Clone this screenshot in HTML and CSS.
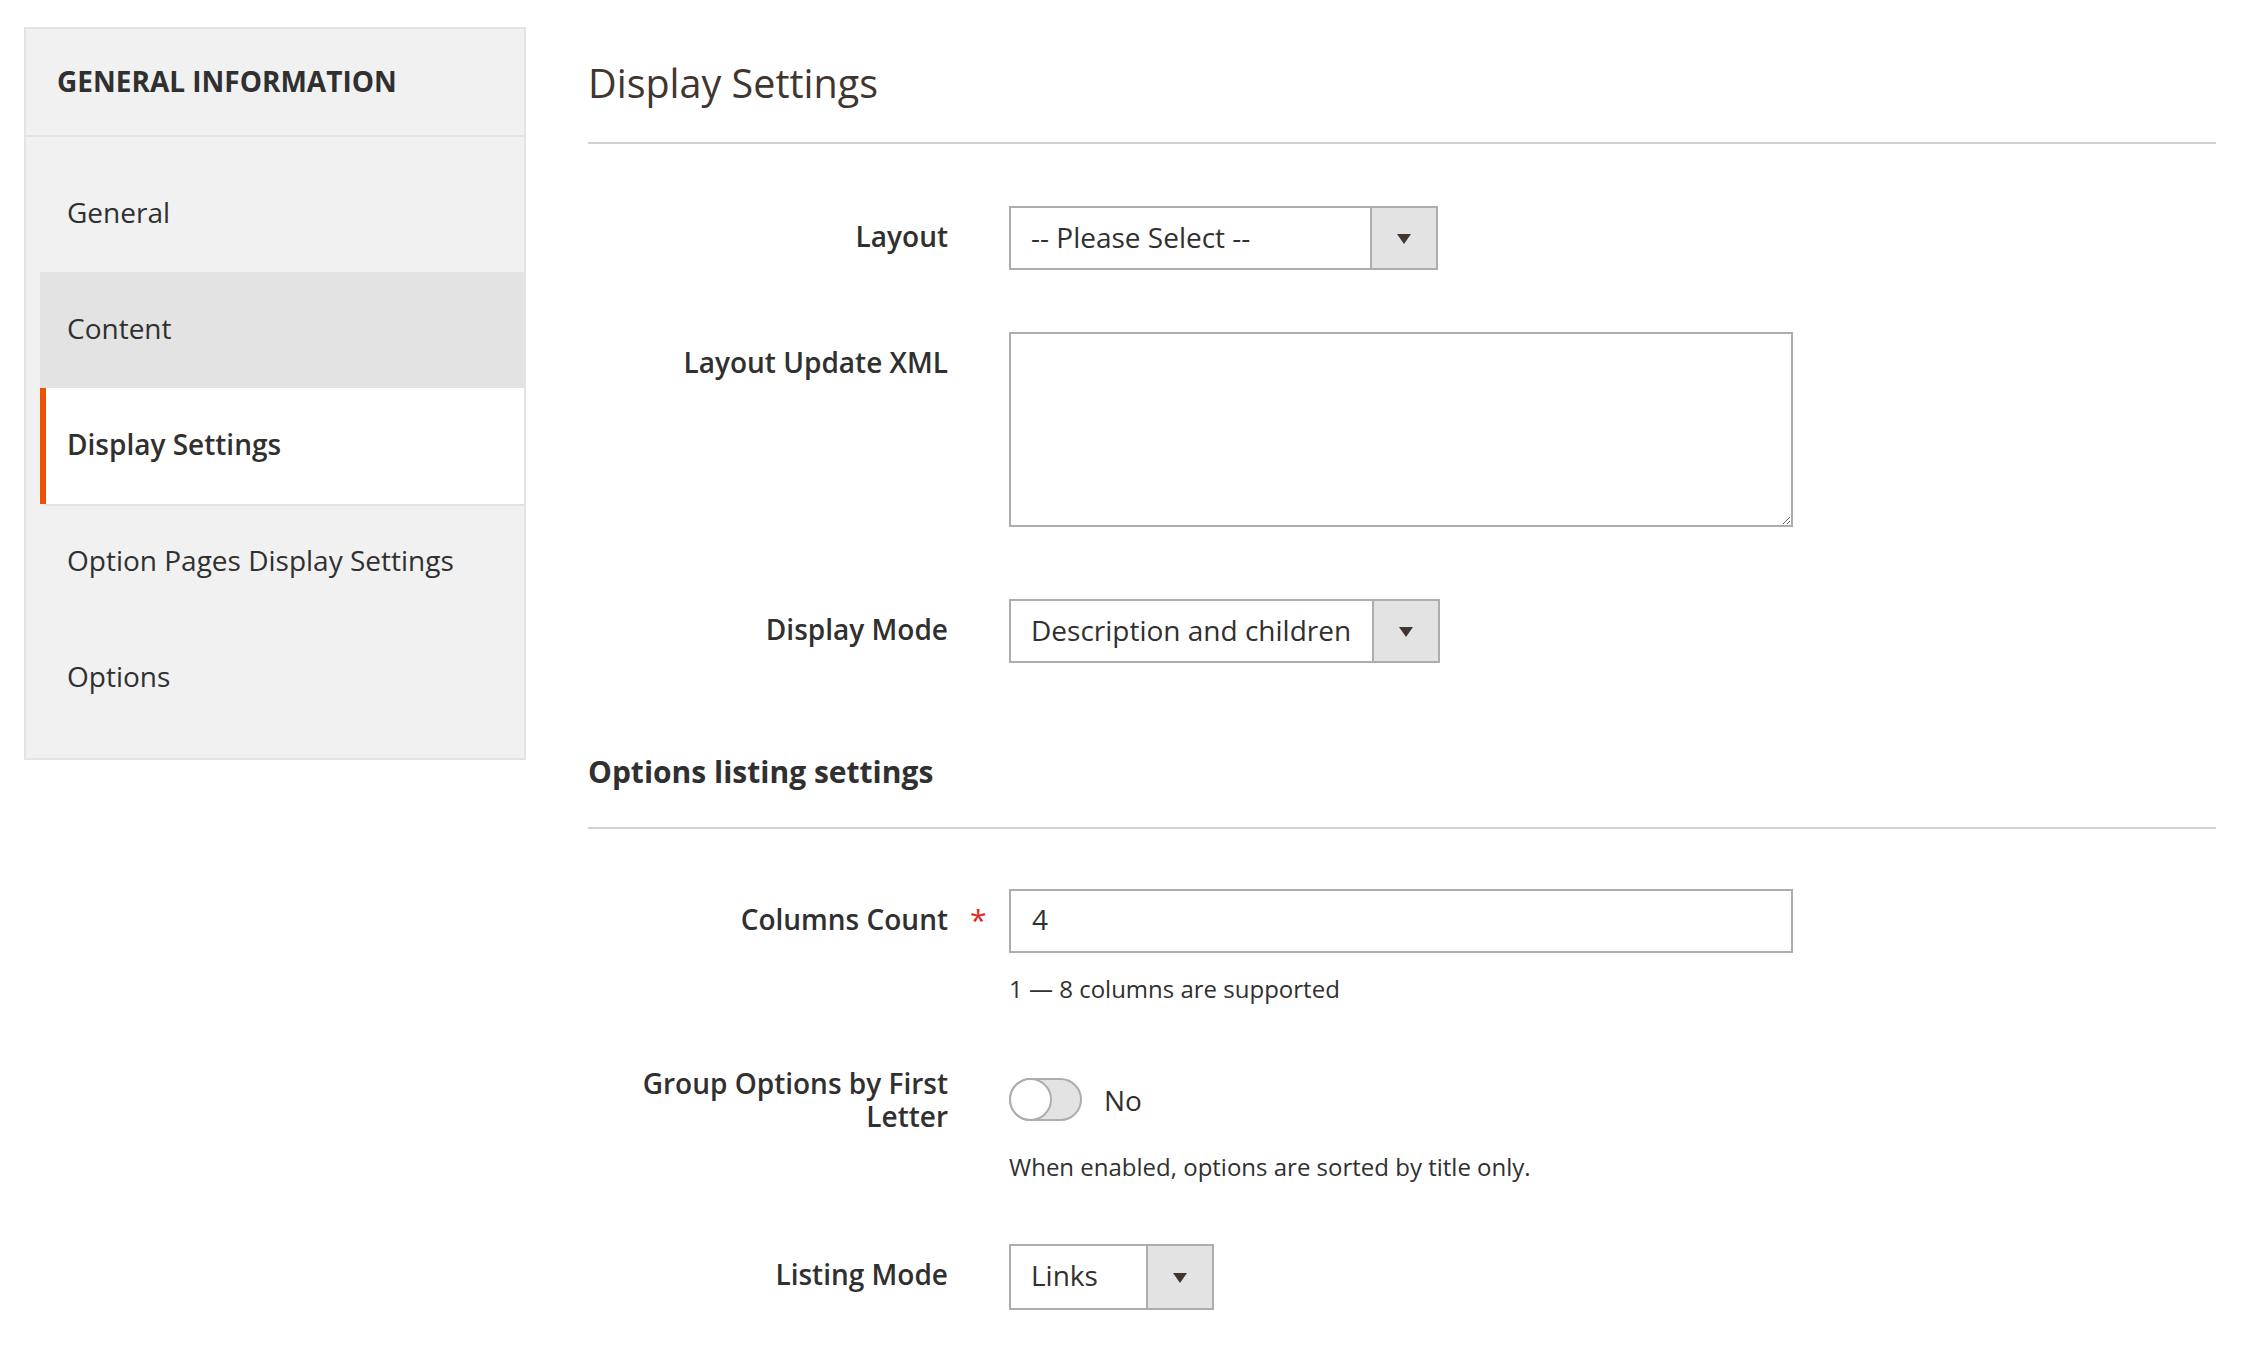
FILE: index.html
```html
<!DOCTYPE html>
<html lang="en">
<head>
<meta charset="utf-8">
<title>Display Settings</title>
<link rel="stylesheet" href="styles.css">
</head>
<body>
<div class="page">
  <aside class="nav">
    <div class="nav-title">General Information</div>
    <ul class="nav-list">
      <li class="nav-item">General</li>
      <li class="nav-item nav-item--hover">Content</li>
      <li class="nav-item nav-item--active">Display Settings</li>
      <li class="nav-item nav-item--after-active">Option Pages Display Settings</li>
      <li class="nav-item">Options</li>
    </ul>
  </aside>

  <main class="main">
    <h1 class="section-head">Display Settings</h1>

    <div class="field field--first">
      <label class="field-label">Layout</label>
      <span class="field-mark"></span>
      <div class="field-control">
        <div class="select select--layout">
          <span class="select-value">-- Please Select --</span>
          <span class="select-arrow"><span class="tri"></span></span>
        </div>
      </div>
    </div>

    <div class="field field--xml">
      <label class="field-label">Layout Update XML</label>
      <span class="field-mark"></span>
      <div class="field-control">
        <textarea class="textarea"></textarea>
      </div>
    </div>

    <div class="field field--mode">
      <label class="field-label">Display Mode</label>
      <span class="field-mark"></span>
      <div class="field-control">
        <div class="select select--mode">
          <span class="select-value">Description and children</span>
          <span class="select-arrow"><span class="tri"></span></span>
        </div>
      </div>
    </div>

    <h2 class="sub-head">Options listing settings</h2>

    <div class="field field--columns">
      <label class="field-label">Columns Count</label>
      <span class="field-mark field-mark--required">*</span>
      <div class="field-control">
        <input class="input" type="text" value="4">
        <div class="field-note">1 — 8 columns are supported</div>
      </div>
    </div>

    <div class="field field--group">
      <label class="field-label field-label--wrap">Group Options by First Letter</label>
      <span class="field-mark"></span>
      <div class="field-control field-control--switch">
        <div class="switch-row">
          <span class="switch"><span class="switch-knob"></span></span>
          <span class="switch-text">No</span>
        </div>
        <div class="field-note field-note--switch">When enabled, options are sorted by title only.</div>
      </div>
    </div>

    <div class="field field--listing">
      <label class="field-label">Listing Mode</label>
      <span class="field-mark"></span>
      <div class="field-control">
        <div class="select select--listing">
          <span class="select-value">Links</span>
          <span class="select-arrow"><span class="tri"></span></span>
        </div>
      </div>
    </div>
  </main>
</div>
</body>
</html>
```

FILE: styles.css
```css
* { box-sizing: border-box; }

html, body {
  margin: 0;
  padding: 0;
  background: #ffffff;
  color: #303030;
  font-family: "Open Sans", "Noto Sans", "Liberation Sans", sans-serif;
}

.page {
  display: flex;
  align-items: flex-start;
  gap: 62px;
  padding: 27px 26px 0 24px;
}

/* ---------- Sidebar ---------- */
.nav {
  flex: 0 0 502px;
  width: 502px;
  background: #f1f1f1;
  border: 2px solid #e3e3e3;
}

.nav-title {
  padding: 33px 20px 35px 31px;
  font-size: 28px;
  line-height: 38px;
  font-weight: 700;
  text-transform: uppercase;
  color: #303030;
  border-bottom: 2px solid #e3e3e3;
}

.nav-list {
  list-style: none;
  margin: 0;
  padding: 19px 0 22px 14px;
}

.nav-item {
  padding: 37px 20px 41px 21px;
  border-left: 6px solid transparent;
  font-size: 28px;
  line-height: 38px;
  color: #303030;
}

.nav-item--hover {
  background: #e3e3e3;
}

.nav-item--active {
  background: #ffffff;
  border-left-color: #eb5202;
  font-weight: 600;
}

.nav-item--after-active {
  border-top: 2px solid #e3e3e3;
  padding-top: 35px;
}

/* ---------- Main ---------- */
.main {
  flex: 1 1 auto;
  min-width: 0;
}

.section-head {
  margin: 0;
  padding: 33px 0 35px;
  font-size: 39.5px;
  line-height: 47px;
  font-weight: 400;
  color: #41362f;
  border-bottom: 2px solid #d1d1d1;
}

.sub-head {
  margin: 90px 0 0;
  padding: 0 0 36px;
  font-size: 30px;
  line-height: 38px;
  font-weight: 700;
  color: #303030;
  border-bottom: 2px solid #d1d1d1;
}

.field {
  display: grid;
  grid-template-columns: 360px 61px 784px;
  align-items: start;
}

.field--first { margin-top: 62px; }
.field--xml { margin-top: 62px; }
.field--mode { margin-top: 72px; }
.field--columns { margin-top: 60px; }
.field--group { margin-top: 61px; }
.field--listing { margin-top: 60px; }

.field-label {
  text-align: right;
  font-size: 28px;
  line-height: 38px;
  font-weight: 600;
  color: #303030;
  padding-top: 11px;
}

.field-label--wrap {
  line-height: 33px;
  padding-top: 0;
  padding-left: 30px;
}

.field-mark {
  display: block;
}

.field-mark--required {
  color: #e22626;
  font-size: 30px;
  line-height: 38px;
  padding-top: 12px;
  padding-left: 22px;
}

.field-control--switch {
  padding-top: 11px;
}

/* ---------- Select ---------- */
.select {
  display: flex;
  height: 64px;
  border: 2px solid #adadad;
  background: #ffffff;
}

.select--layout { width: 429px; }
.select--mode { width: 431px; }
.select--listing { width: 205px; height: 66px; }

.select-value {
  flex: 1 1 auto;
  padding: 0 0 0 20px;
  font-size: 28px;
  line-height: 58px;
  color: #303030;
  white-space: nowrap;
}

.select--listing .select-value { line-height: 58px; }

.select-arrow {
  flex: 0 0 66px;
  display: flex;
  align-items: center;
  justify-content: center;
  background: #e3e3e3;
  border-left: 2px solid #adadad;
}

.tri {
  width: 0;
  height: 0;
  border-left: 7.5px solid transparent;
  border-right: 7.5px solid transparent;
  border-top: 10px solid #41362f;
  margin-top: 2px;
}

/* ---------- Text inputs ---------- */
.textarea {
  display: block;
  width: 784px;
  height: 195px;
  border: 2px solid #adadad;
  border-radius: 0;
  padding: 10px 20px;
  font-family: inherit;
  font-size: 28px;
  resize: vertical;
  background: #ffffff;
  margin: 0;
}

.input {
  display: block;
  width: 784px;
  height: 64px;
  border: 2px solid #adadad;
  border-radius: 0;
  padding: 0 20px 4px 21px;
  margin: 0;
  font-family: inherit;
  font-size: 28px;
  color: #303030;
  background: #ffffff;
  outline: none;
}

.field-note {
  margin-top: 19px;
  font-size: 24px;
  line-height: 34px;
  color: #303030;
}

.field-note--switch {
  margin-top: 29px;
}

/* ---------- Switch ---------- */
.switch-row {
  display: flex;
  align-items: center;
  gap: 22px;
  height: 43px;
}

.switch {
  position: relative;
  display: block;
  width: 73px;
  height: 43px;
  border: 2px solid #adadad;
  border-radius: 22px;
  background: #e3e3e3;
}

.switch-knob {
  position: absolute;
  left: -2px;
  top: -2px;
  width: 43px;
  height: 43px;
  border: 2px solid #adadad;
  border-radius: 50%;
  background: #ffffff;
}

.switch-text {
  font-size: 28px;
  line-height: 38px;
  color: #303030;
}
```
